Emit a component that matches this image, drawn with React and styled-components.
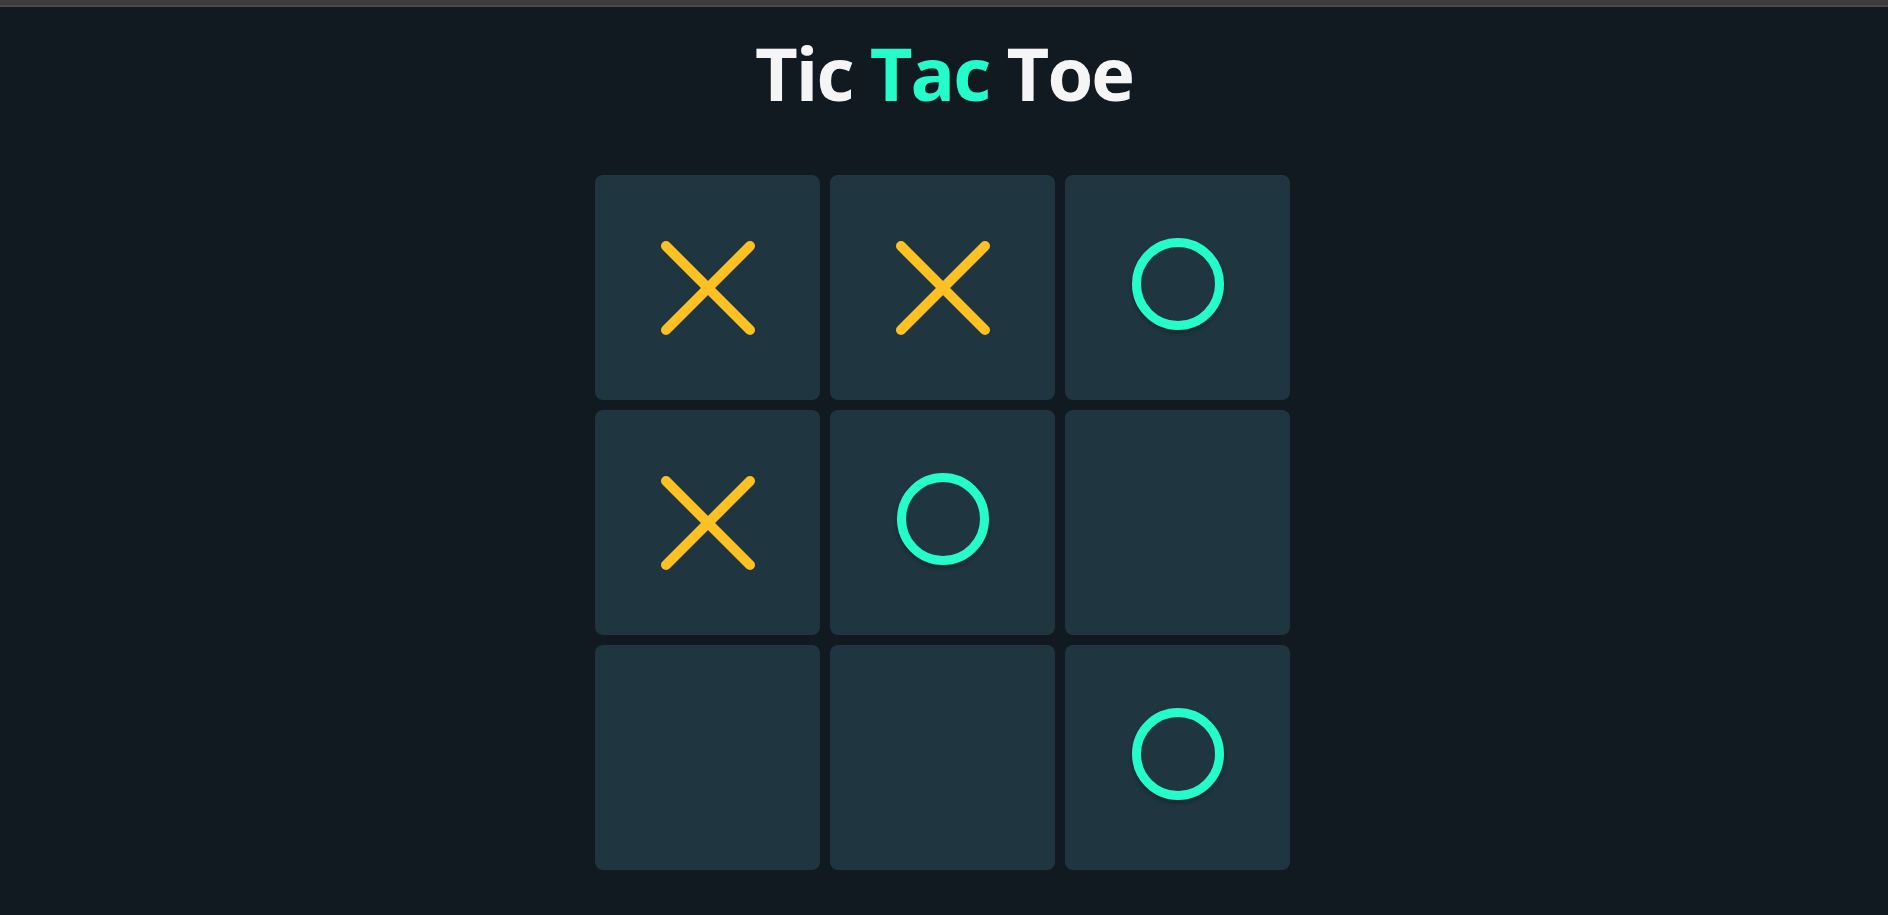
import React from 'react';
import styled, { createGlobalStyle } from 'styled-components';

const GlobalStyle = createGlobalStyle`
    html, body {
        margin: 0;
        padding: 0;
        background: #101a20;
    }
    body {
        font-family: "Open Sans", "Noto Sans", sans-serif;
        min-height: 100vh;
    }
`;

const board = ['X', 'X', 'O', 'X', 'O', null, null, null, 'O'];

const Page = styled.div`
    min-height: 100vh;
    display: flex;
    flex-direction: column;
    align-items: center;
    background: #101a20;
`;

const TopStrip = styled.div`
    align-self: stretch;
    height: 5px;
    background: #3c3c3c;
    border-bottom: 2px solid #4a4a4a;
`;

const Title = styled.h1`
    margin: 15px 0 0;
    font-size: 74px;
    font-weight: 700;
    line-height: normal;
    color: #f5f5f5;
    letter-spacing: -2px;
`;

const Accent = styled.span`
    color: #24fcca;
`;

const Board = styled.div`
    margin: 52px 3px 0 0;
    display: grid;
    grid-template-columns: repeat(3, 225px);
    grid-auto-rows: 225px;
    gap: 10px;
`;

const Cell = styled.button`
    border: none;
    padding: 0;
    border-radius: 8px;
    background: #1f3540;
    display: flex;
    align-items: center;
    justify-content: center;
    cursor: pointer;
`;

const Ring = styled.div`
    width: 92px;
    height: 92px;
    box-sizing: border-box;
    border: 9.5px solid #24fcca;
    border-radius: 50%;
    margin-bottom: 8px;
    box-shadow: 0 3px 4px rgba(0, 0, 0, 0.25);
`;

const CrossMark = () => (
    <svg width="96" height="96" viewBox="0 0 96 96">
        <g stroke="#fdc123" strokeWidth="10" strokeLinecap="round">
            <line x1="6" y1="6" x2="90" y2="90" />
            <line x1="90" y1="6" x2="6" y2="90" />
        </g>
    </svg>
);

const App = () => (
    <>
        <GlobalStyle />
        <Page>
            <TopStrip />
            <Title>Tic <Accent>Tac</Accent> Toe</Title>
            <Board>
                {board.map((mark, i) => (
                    <Cell key={i}>
                        {mark === 'X' && <CrossMark />}
                        {mark === 'O' && <Ring />}
                    </Cell>
                ))}
            </Board>
        </Page>
    </>
);

export default App;
